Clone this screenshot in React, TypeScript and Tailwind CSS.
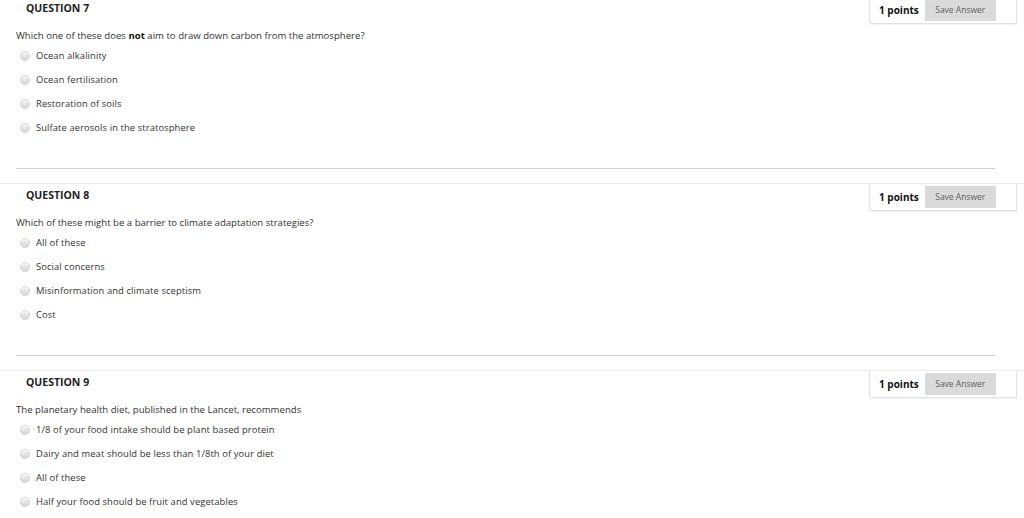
const questions = [
  {
    num: 7,
    text: (
      <>
        Which one of these does <b className="font-bold text-[#111]">not</b> aim to draw down carbon from the atmosphere?
      </>
    ),
    options: ["Ocean alkalinity", "Ocean fertilisation", "Restoration of soils", "Sulfate aerosols in the stratosphere"],
  },
  {
    num: 8,
    text: <>Which of these might be a barrier to climate adaptation strategies?</>,
    options: ["All of these", "Social concerns", "Misinformation and climate sceptism", "Cost"],
  },
  {
    num: 9,
    text: <>The planetary health diet, published in the Lancet, recommends</>,
    options: [
      "1/8 of your food intake should be plant based protein",
      "Dairy and meat should be less than 1/8th of your diet",
      "All of these",
      "Half your food should be fruit and vegetables",
    ],
  },
];

const Radio = () => (
  <span className="inline-block w-[10px] h-[10px] rounded-full border border-[#d0d0d0] bg-gradient-to-b from-[#f4f4f4] to-[#d6d6d6] shadow-[inset_0_1px_1px_rgba(255,255,255,0.8)]" />
);

const Question = ({ q }: { q: (typeof questions)[number] }) => (
  <div>
    <div className="flex justify-between items-start h-[27px] border-t border-[#ececec]">
      <h3 className="pl-[26px] pt-[3px] text-[10.5px] leading-[16px] font-bold text-[#222]">QUESTION {q.num}</h3>
      <div className="w-[148px] h-[27px] mr-[7px] border-l border-b border-r border-[#e2e2e2] rounded-bl-[3px] shadow-[0_1px_2px_rgba(0,0,0,0.06)] flex items-start pt-[2px] pl-[9px]">
        <span className="text-[10px] leading-[22px] font-bold text-[#111]">1 points</span>
        <button className="ml-[6px] w-[71px] h-[22px] bg-[#dadada] text-[8.5px] text-[#5f5f5f]">Save Answer</button>
      </div>
    </div>
    <div className="px-[16px]">
      <p className="mt-[5px] text-[9.6px] leading-[16px] text-[#333]">{q.text}</p>
      {q.options.map((o) => (
        <label key={o} className="flex items-center h-[24px] pl-[4px] text-[9.4px] text-[#333]">
          <Radio />
          <span className="ml-[6px] tracking-[0.1px]">{o}</span>
        </label>
      ))}
      <div className="mt-[28px] mr-[13px] border-t border-[#cfcfcf]" />
      <div className="h-[14px]" />
    </div>
  </div>
);

export default function App() {
  return (
    <div className="w-[1024px] h-[518px] overflow-hidden bg-white" style={{ fontFamily: '"Open Sans", sans-serif' }}>
      <div className="-mt-[4px]">
        {questions.map((q) => (
          <Question key={q.num} q={q} />
        ))}
      </div>
    </div>
  );
}
